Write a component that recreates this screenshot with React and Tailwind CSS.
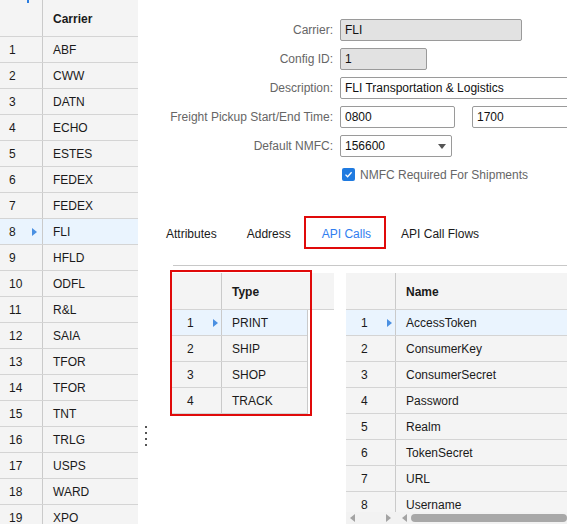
import React from "react";

const carriers = ["ABF","CWW","DATN","ECHO","ESTES","FEDEX","FEDEX","FLI","HFLD","ODFL","R&L","SAIA","TFOR","TFOR","TNT","TRLG","USPS","WARD","XPO"];
const types = ["PRINT","SHIP","SHOP","TRACK"];
const names = ["AccessToken","ConsumerKey","ConsumerSecret","Password","Realm","TokenSecret","URL","Username"];

function LeftRow({ n, text, sel }) {
  return (
    <div className={sel ? "flex h-[26px] shrink-0 border-b border-[#d4d4d4] bg-[#eaf4fe]" : "flex h-[26px] shrink-0 border-b border-[#d4d4d4]"}>
      <div className="relative w-[43px] shrink-0 border-r border-[#cacaca] pl-[9px] leading-[27px]">
        {n}
        {sel && <span className="absolute left-[32px] top-[9px] w-0 h-0 border-y-[4px] border-y-transparent border-l-[5px] border-l-[#4a90e2]" />}
      </div>
      <div className="pl-[10px] leading-[27px]">{text}</div>
    </div>
  );
}

function GridRow({ n, text, sel }) {
  return (
    <div className={sel ? "flex h-[26px] shrink-0 border-b border-[#d4d4d4] bg-[#eaf4fe]" : "flex h-[26px] shrink-0 border-b border-[#d4d4d4]"}>
      <div className="relative w-[50px] shrink-0 border-r border-[#cacaca] pl-[15px] leading-[27px]">
        {n}
        {sel && <span className="absolute left-[41px] top-[9px] w-0 h-0 border-y-[4px] border-y-transparent border-l-[5px] border-l-[#4a90e2]" />}
      </div>
      <div className="pl-[10px] leading-[27px]">{text}</div>
    </div>
  );
}

function Label({ children }) {
  return <div className="w-[182px] shrink-0 text-right text-[#666] leading-[18px] pr-[1px]">{children}</div>;
}

export default function App() {
  return (
    <div className="w-[567px] h-[524px] overflow-hidden flex bg-white text-[12px] text-[#1a1a1a]" style={{ fontFamily: '"Liberation Sans", Arial, sans-serif' }}>
      {/* Left carrier grid */}
      <div className="relative w-[138px] shrink-0 bg-[#f4f4f4] flex flex-col overflow-hidden">
        <span className="absolute left-[27px] top-0 w-[2px] h-[3px] bg-[#2b7de0]" />
        <div className="flex h-[37px] shrink-0 border-b border-[#d4d4d4]">
          <div className="w-[43px] shrink-0 border-r border-[#cacaca]" />
          <div className="pl-[10px] leading-[38px] font-bold">Carrier</div>
        </div>
        {carriers.map((c, i) => (
          <LeftRow key={i} n={i + 1} text={c} sel={i === 7} />
        ))}
      </div>

      {/* Splitter */}
      <div className="w-[14px] shrink-0 flex flex-col items-center pt-[426px] gap-[4px] pl-[1px]">
        <span className="w-[2px] h-[2px] bg-[#555]" />
        <span className="w-[2px] h-[2px] bg-[#555]" />
        <span className="w-[2px] h-[2px] bg-[#555]" />
        <span className="w-[2px] h-[2px] bg-[#555]" />
      </div>

      {/* Right content */}
      <div className="flex-1 min-w-0 flex flex-col">
        <div className="flex flex-col pt-[19px] gap-[7px]">
          <div className="flex items-center gap-[6px] h-[22px]">
            <Label>Carrier:</Label>
            <div className="w-[182px] h-[22px] shrink-0 rounded-[2px] border border-[#9a9a9a] bg-[#e2e2e2] pl-[4px] leading-[21px] text-[#111]">FLI</div>
          </div>
          <div className="flex items-center gap-[6px] h-[22px]">
            <Label>Config ID:</Label>
            <div className="w-[87px] h-[22px] shrink-0 rounded-[2px] border border-[#9a9a9a] bg-[#e2e2e2] pl-[4px] leading-[21px] text-[#111]">1</div>
          </div>
          <div className="flex items-center gap-[6px] h-[22px]">
            <Label>Description:</Label>
            <div className="w-[240px] h-[22px] shrink-0 rounded-[2px] border border-[#9a9a9a] bg-white pl-[4px] leading-[21px] text-[#111]">FLI Transportation &amp; Logistics</div>
          </div>
          <div className="flex items-center gap-[6px] h-[22px]">
            <Label>Freight Pickup Start/End Time:</Label>
            <div className="w-[115px] h-[22px] shrink-0 rounded-[2px] border border-[#9a9a9a] bg-white pl-[4px] leading-[21px] text-[#111]">0800</div>
            <div className="ml-[11px] w-[120px] h-[22px] shrink-0 rounded-[2px] border border-[#9a9a9a] bg-white pl-[4px] leading-[21px] text-[#111]">1700</div>
          </div>
          <div className="flex items-center gap-[6px] h-[22px]">
            <Label>Default NMFC:</Label>
            <div className="w-[112px] h-[22px] shrink-0 rounded-[2px] border border-[#9a9a9a] bg-white pl-[4px] leading-[21px] text-[#111] flex items-center justify-between pr-[5px]">
              <span>156600</span>
              <span className="w-0 h-0 border-x-[4.5px] border-x-transparent border-t-[5px] border-t-[#555]" />
            </div>
          </div>
        </div>

        <div className="flex items-center mt-[11px] ml-[190px] h-[13px]">
          <div className="w-[13px] h-[13px] rounded-[2px] bg-[#1f7ae0] flex items-center justify-center">
            <svg width="9" height="9" viewBox="0 0 9 9" fill="none">
              <path d="M1.5 4.6 L3.6 6.7 L7.6 2.2" stroke="white" strokeWidth="1.3" />
            </svg>
          </div>
          <span className="ml-[5px] text-[#666] leading-[14px]">NMFC Required For Shipments</span>
        </div>

        {/* Tabs */}
        <div className="flex items-start mt-[35px] ml-[14px] h-[33px] gap-[30px]">
          <span className="h-[33px] border-y-2 border-transparent leading-[32px]">Attributes</span>
          <span className="h-[33px] border-y-2 border-transparent leading-[32px]">Address</span>
          <span className="-ml-[17px] -mr-[15px] h-[33px] border-2 border-[#e00a0a] pl-[16px] pr-[13px] leading-[32px] text-[#2f7ef0]">API Calls</span>
          <span className="h-[33px] border-y-2 border-transparent leading-[32px]">API Call Flows</span>
        </div>

        <div className="mt-[16px] ml-[21px] h-px bg-[#c8c8c8] shrink-0" />

        {/* Grids */}
        <div className="flex mt-[7px] ml-[20px] gap-[12px] flex-1 min-h-0">
          <div className="relative w-[162px] shrink-0 self-start">
            <div className="flex h-[37px] bg-[#f4f4f4] border-b border-[#d4d4d4]">
              <div className="w-[50px] shrink-0 border-r border-[#cacaca]" />
              <div className="pl-[10px] leading-[38px] font-bold">Type</div>
            </div>
            <div className="w-[136px] bg-[#f4f4f4] border-r border-[#cacaca] flex flex-col">
              {types.map((t, i) => (
                <GridRow key={i} n={i + 1} text={t} sel={i === 0} />
              ))}
            </div>
            <div className="absolute -left-[2px] -top-[3px] w-[142px] h-[146px] border-2 border-[#e00a0a] pointer-events-none" />
          </div>

          <div className="relative flex-1 min-w-0 h-[251px] bg-[#f4f4f4] overflow-hidden flex flex-col">
            <div className="flex h-[37px] shrink-0 border-b border-[#d4d4d4]">
              <div className="w-[50px] shrink-0 border-r border-[#cacaca]" />
              <div className="pl-[10px] leading-[38px] font-bold">Name</div>
            </div>
            <div className="flex-1 min-h-0 overflow-hidden flex flex-col">
              {names.map((t, i) => (
                <GridRow key={i} n={i + 1} text={t} sel={i === 0} />
              ))}
            </div>
            <div className="h-[12px] shrink-0 bg-[#f2f2f2] flex items-center">
              <span className="ml-[4px] w-0 h-0 border-y-[4px] border-y-transparent border-r-[5px] border-r-[#a3a3a3]" />
              <span className="ml-[31px] w-0 h-0 border-y-[4px] border-y-transparent border-l-[5px] border-l-[#a3a3a3]" />
              <span className="ml-[11px] w-0 h-0 border-y-[4px] border-y-transparent border-r-[5px] border-r-[#a3a3a3]" />
              <span className="ml-[4px] flex-1 h-[8px] rounded-full bg-[#a8a8a8]" />
            </div>
          </div>
        </div>
      </div>
    </div>
  );
}
